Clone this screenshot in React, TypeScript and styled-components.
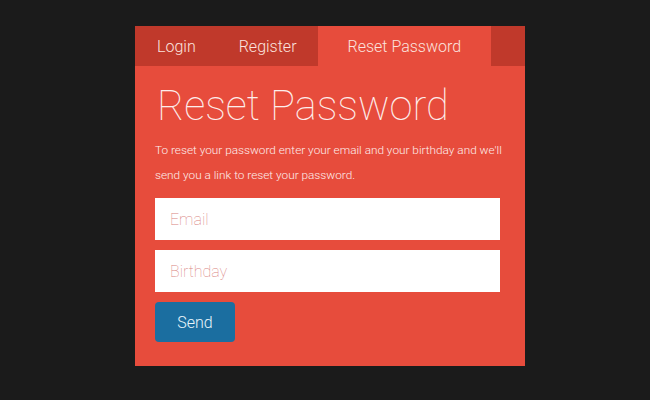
import React from 'react';
import styled, { createGlobalStyle } from 'styled-components';

const GlobalStyle = createGlobalStyle`
  html, body {
    margin: 0;
    padding: 0;
    background: #1b1b1b;
    height: 100%;
  }
  body {
    font-family: Roboto, "Liberation Sans", sans-serif;
    font-weight: 300;
  }
`;

const tabs = [
  { label: 'Login', pad: 22 },
  { label: 'Register', pad: 21 },
  { label: 'Reset Password', pad: 30, active: true },
];

const App: React.FC = () => {
  return (
    <Page>
      <GlobalStyle />
      <Panel>
        <TabBar>
          {tabs.map((t) => (
            <Tab key={t.label} $active={!!t.active} $pad={t.pad}>
              {t.label}
            </Tab>
          ))}
        </TabBar>
        <Body>
          <Title>Reset Password</Title>
          <Text>
            To reset your password enter your email and your birthday and we'll send you a link to
            reset your password.
          </Text>
          <Input type="email" placeholder="Email" />
          <Input type="text" placeholder="Birthday" />
          <SendButton>Send</SendButton>
        </Body>
      </Panel>
    </Page>
  );
};

export default App;

const Page = styled.div`
  width: 650px;
  height: 400px;
  padding: 26px 0 0 135px;
  box-sizing: border-box;
`;

const Panel = styled.div`
  width: 390px;
  height: 340px;
  background: #e74c3c;
  display: flex;
  flex-direction: column;
`;

const TabBar = styled.div`
  height: 40px;
  display: flex;
  background: #c0392b;
`;

const Tab = styled.div<{ $active: boolean; $pad: number }>`
  display: flex;
  align-items: center;
  padding: 0 ${(p) => p.$pad}px;
  font-size: 16px;
  color: #fbe3df;
  background: ${(p) => (p.$active ? '#e74c3c' : 'transparent')};
`;

const Body = styled.div`
  padding: 0 0 0 20px;
  display: flex;
  flex-direction: column;
  align-items: flex-start;
`;

const Title = styled.h1`
  margin: 14px 0 0 2px;
  font-size: 41.6px;
  font-weight: 100;
  line-height: 52px;
  color: #fdeeec;
`;

const Text = styled.p`
  margin: 6px 0 0;
  width: 360px;
  font-size: 11.8px;
  line-height: 25px;
  color: #fdeeec;
`;

const Input = styled.input`
  box-sizing: border-box;
  width: 345px;
  height: 42px;
  margin: 0 0 10px;
  padding: 0 15px;
  border: none;
  outline: none;
  background: #fff;
  font-family: Roboto, "Liberation Sans", sans-serif;
  font-weight: 100;
  font-size: 16px;
  color: #333;

  &:first-of-type {
    margin-top: 10px;
  }

  &::placeholder {
    color: #d9827e;
  }
`;

const SendButton = styled.button`
  width: 80px;
  height: 40px;
  border: none;
  border-radius: 4px;
  background: #1b6ea0;
  color: #e8f6fb;
  font-family: Roboto, "Liberation Sans", sans-serif;
  font-weight: 300;
  font-size: 16px;
  cursor: pointer;
`;
